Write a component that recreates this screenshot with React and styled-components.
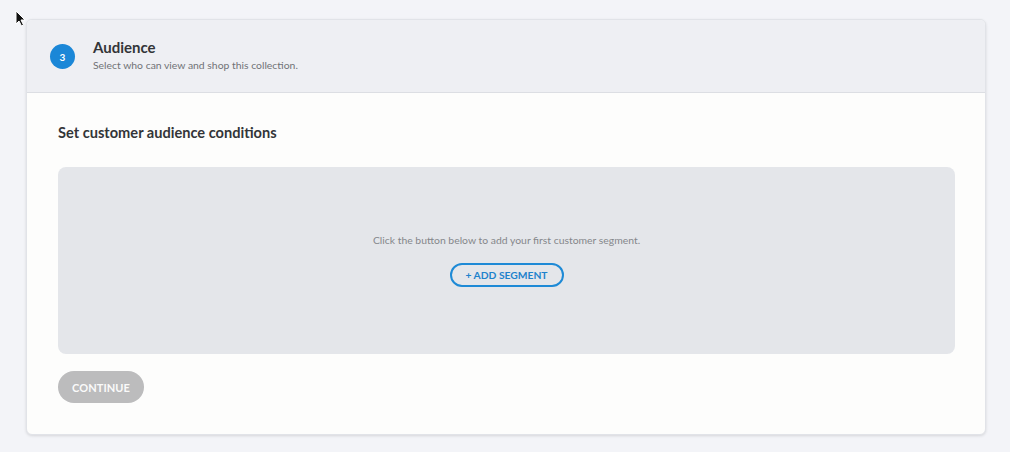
import React from "react";
import styled, { createGlobalStyle } from "styled-components";

const Global = createGlobalStyle`
  html, body { margin: 0; padding: 0; background: #f3f4f8; }
  body { font-family: Lato, "Open Sans", sans-serif; -webkit-font-smoothing: antialiased; }
  * { box-sizing: border-box; }
`;

const Page = styled.div`
  position: relative;
  width: 1010px;
  height: 452px;
  padding: 19px 24px 0 26px;
  background: #f3f4f8;
`;

const Cursor = styled.svg`
  position: absolute;
  left: 15px;
  top: 10px;
`;

const Card = styled.section`
  width: 960px;
  height: 416px;
  background: #fdfdfc;
  border: 1px solid #e1e3e8;
  border-radius: 6px;
  box-shadow: 0 1px 3px rgba(0, 0, 0, 0.12);
  overflow: hidden;
  display: flex;
  flex-direction: column;
`;

const Header = styled.header`
  height: 73px;
  flex: none;
  background: #eeeff3;
  border-bottom: 1px solid #dcdee3;
  display: flex;
  align-items: center;
  padding: 0 0 0 23px;
  gap: 18px;
`;

const StepBadge = styled.div`
  width: 25px;
  height: 25px;
  border-radius: 50%;
  background: #1b87d7;
  color: #fff;
  font-size: 10px;
  font-weight: 700;
  display: flex;
  align-items: center;
  justify-content: center;
  margin-top: 1px;
`;

const HeaderText = styled.div`
  display: flex;
  flex-direction: column;
  gap: 1px;
  margin-top: -3px;
`;

const Title = styled.h2`
  margin: 0;
  font-size: 15px;
  font-weight: 700;
  color: #333538;
  line-height: 20px;
`;

const Subtitle = styled.p`
  margin: 0;
  font-size: 10.4px;
  color: #707276;
  line-height: 14px;
`;

const Body = styled.div`
  padding: 29px 31px 0 31px;
  display: flex;
  flex-direction: column;
  align-items: flex-start;
`;

const SectionTitle = styled.h3`
  margin: 0;
  font-size: 14.6px;
  font-weight: 700;
  color: #333538;
  line-height: 22px;
`;

const EmptyPanel = styled.div`
  margin-top: 23px;
  width: 897px;
  height: 187px;
  background: #e4e6ea;
  border-radius: 8px;
  display: flex;
  flex-direction: column;
  align-items: center;
  padding-top: 66px;
  gap: 16px;
`;

const EmptyText = styled.p`
  margin: 0;
  font-size: 10.4px;
  color: #85878b;
  line-height: 14px;
`;

const OutlineButton = styled.button`
  width: 114px;
  height: 24px;
  border: 2px solid #1e8ad6;
  border-radius: 12px;
  background: transparent;
  color: #1e82cc;
  font-family: inherit;
  font-size: 10.3px;
  font-weight: 700;
  padding: 0;
  cursor: pointer;
`;

const PrimaryButton = styled.button`
  margin-top: 17px;
  width: 86px;
  height: 32px;
  border: none;
  border-radius: 16px;
  background: ${(p) => (p.disabled ? "#bcbcbd" : "#1e8ad6")};
  color: #fafafa;
  font-family: inherit;
  font-size: 11px;
  font-weight: 700;
  letter-spacing: 0.1px;
  padding: 0;
`;

export default function App() {
  return (
    <>
      <Global />
      <Page>
        <Card>
          <Header>
            <StepBadge>3</StepBadge>
            <HeaderText>
              <Title>Audience</Title>
              <Subtitle>Select who can view and shop this collection.</Subtitle>
            </HeaderText>
          </Header>
          <Body>
            <SectionTitle>Set customer audience conditions</SectionTitle>
            <EmptyPanel>
              <EmptyText>Click the button below to add your first customer segment.</EmptyText>
              <OutlineButton>+ ADD SEGMENT</OutlineButton>
            </EmptyPanel>
            <PrimaryButton disabled>CONTINUE</PrimaryButton>
          </Body>
        </Card>
        <Cursor width="12" height="17" viewBox="0 0 12 17">
          <path d="M1 1 L1 14 L4 11 L6.5 16 L8.5 15 L6 10 L10 10 Z" fill="#111" stroke="#fff" strokeWidth="1" />
        </Cursor>
      </Page>
    </>
  );
}
